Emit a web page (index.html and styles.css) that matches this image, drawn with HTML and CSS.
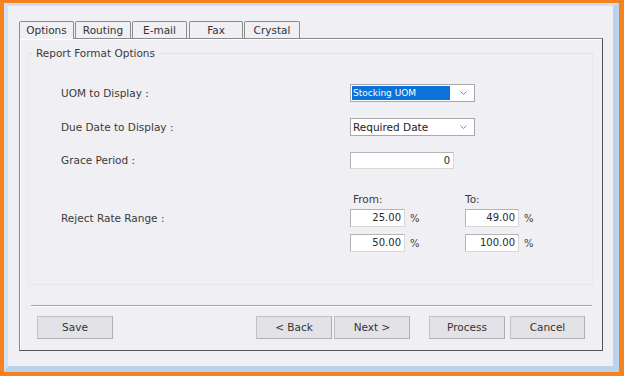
FILE: index.html
```html
<!DOCTYPE html>
<html>
<head>
<meta charset="utf-8">
<link rel="stylesheet" href="styles.css">
</head>
<body>
<div class="frame">
  <div class="tabs">
    <div class="tab active">Options</div>
    <div class="tab">Routing</div>
    <div class="tab">E-mail</div>
    <div class="tab">Fax</div>
    <div class="tab">Crystal</div>
  </div>
  <div class="panel">
    <fieldset class="group">
      <legend>Report Format Options</legend>
      <div class="group-body">
        <div class="row r1">
          <div class="label">UOM to Display :</div>
          <div class="select wide">
            <span class="sel-text highlighted">Stocking UOM</span>
            <svg class="chev" width="9" height="6" viewBox="0 0 9 6"><path d="M1.5 1.5 L4.5 4.5 L7.5 1.5" fill="none" stroke="#8a8a8a" stroke-width="1"/></svg>
          </div>
        </div>
        <div class="row r2">
          <div class="label">Due Date to Display :</div>
          <div class="select wide">
            <span class="sel-text">Required Date</span>
            <svg class="chev" width="9" height="6" viewBox="0 0 9 6"><path d="M1.5 1.5 L4.5 4.5 L7.5 1.5" fill="none" stroke="#8a8a8a" stroke-width="1"/></svg>
          </div>
        </div>
        <div class="row r3">
          <div class="label">Grace Period :</div>
          <div class="input grace">0</div>
        </div>
        <div class="range">
          <div class="range-head">
            <span class="col-from">From:</span>
            <span class="col-to">To:</span>
          </div>
          <div class="row r4">
            <div class="label">Reject Rate Range :</div>
            <div class="pair"><div class="input num">25.00</div><span class="pct">%</span></div>
            <div class="pair to"><div class="input num">49.00</div><span class="pct">%</span></div>
          </div>
          <div class="row r5">
            <div class="label"></div>
            <div class="pair"><div class="input num">50.00</div><span class="pct">%</span></div>
            <div class="pair to"><div class="input num">100.00</div><span class="pct">%</span></div>
          </div>
        </div>
      </div>
    </fieldset>
    <div class="separator"></div>
    <div class="buttons">
      <div class="btn save">Save</div>
      <div class="btn back">&lt; Back</div>
      <div class="btn next">Next &gt;</div>
      <div class="btn process">Process</div>
      <div class="btn cancel">Cancel</div>
    </div>
  </div>
</div>
</body>
</html>
```
FILE: styles.css
```css
html, body {
  margin: 0;
  padding: 0;
}
body {
  width: 624px;
  height: 376px;
  background: #f5821f;
  font-family: "DejaVu Sans", Verdana, sans-serif;
  font-size: 10.5px;
  color: #383838;
  overflow: hidden;
}
.frame {
  box-sizing: border-box;
  margin: 3px 5px 0 4px;
  width: 615px;
  height: 369px;
  border-style: solid;
  border-color: #d7dbee #b9d3ec #b9d3ec #d3e2f2;
  border-width: 3px 6px 6px 4px;
  background: #f0eff3;
  padding-top: 14px;
  padding-left: 11px;
}
.tabs {
  display: flex;
  height: 18px;
  align-items: flex-end;
}
.tab {
  box-sizing: border-box;
  height: 17px;
  border: 1px solid #8c8c8c;
  border-bottom: none;
  border-radius: 2px 2px 0 0;
  text-align: center;
  line-height: 16px;
  color: #333;
  background: #f0eff3;
  margin-right: 1px;
}
.tab:nth-child(1) { width: 55px; }
.tab:nth-child(2) { width: 56px; }
.tab:nth-child(3) { width: 55px; margin-right: 2px; }
.tab:nth-child(4) { width: 54px; }
.tab:nth-child(5) { width: 56px; }
.tab.active {
  height: 18px;
  line-height: 17px;
  margin-bottom: -1px;
  position: relative;
  z-index: 1;
}
.panel {
  box-sizing: border-box;
  width: 584px;
  height: 313px;
  border: 1px solid #8a8a8a;
  border-right-color: #555;
  border-bottom-color: #555;
  box-shadow: inset 1px 1px 0 #fdfdfd;
  padding: 0 9px 0 8px;
}
.group {
  box-sizing: border-box;
  margin: 8px 0 0 0;
  padding: 0;
  height: 238px;
  border: 1px solid #e8e7eb;
  border-top-color: #e2e1e6;
}
.group legend {
  margin-left: 3px;
  padding: 0 4px;
  line-height: 13px;
  color: #3a3a3a;
}
.group-body {
  padding-left: 32px;
}
.row {
  display: flex;
  align-items: center;
  height: 18px;
}
.r1 { margin-top: 24px; }
.r2 { margin-top: 16px; }
.r3 { margin-top: 15px; }
.label {
  width: 289px;
  flex: none;
  color: #3a3a3a;
}
.select {
  box-sizing: border-box;
  height: 18px;
  width: 125px;
  border: 1px solid #a9a9a9;
  background: #fff;
  display: flex;
  align-items: center;
  padding: 0 6px 0 1px;
}
.sel-text {
  flex: 1;
  height: 14px;
  line-height: 14px;
  padding-left: 1px;
  color: #222;
}
.sel-text.highlighted {
  background: #0a72d9;
  color: #fff;
  font-size: 9px;
  margin-right: 5px;
}
.chev { flex: none; margin-left: 4px; }
.input {
  box-sizing: border-box;
  height: 18px;
  border: 1px solid #b4b4b4;
  border-right-color: #d8d8d8;
  border-bottom-color: #d8d8d8;
  background: #fff;
  text-align: right;
  padding-right: 3px;
  line-height: 16px;
  font-size: 10px;
  color: #2a2a2a;
}
.grace { width: 104px; height: 17px; line-height: 15px; }
.range-head {
  display: flex;
  margin-top: 23px;
  height: 15px;
  line-height: 15px;
  padding-left: 292px;
  color: #3a3a3a;
}
.col-from { width: 112px; }
.r4 { margin-top: 2px; }
.r5 { margin-top: 7px; }
.pair {
  display: flex;
  align-items: center;
  width: 115px;
  flex: none;
}
.num { width: 55px; }
.pair.to .num { width: 54px; }
.pct {
  margin-left: 5px;
  font-size: 10px;
  color: #444;
}
.separator {
  margin: 20px 1px 0 3px;
  height: 1px;
  background: #a8a8ac;
  box-shadow: 0 1px 0 #fbfbfb;
}
.buttons {
  display: flex;
  margin-top: 10px;
  padding-left: 9px;
}
.btn {
  box-sizing: border-box;
  width: 76px;
  height: 23px;
  border: 1px solid #c2c2c4;
  border-right-color: #b0b0b2;
  border-bottom-color: #b0b0b2;
  background: #e3e2e6;
  text-align: center;
  line-height: 21px;
  color: #333;
}
.back { margin-left: 143px; }
.next { margin-left: 2px; }
.process { margin-left: 19px; }
.cancel { margin-left: 5px; width: 75px; }
```
